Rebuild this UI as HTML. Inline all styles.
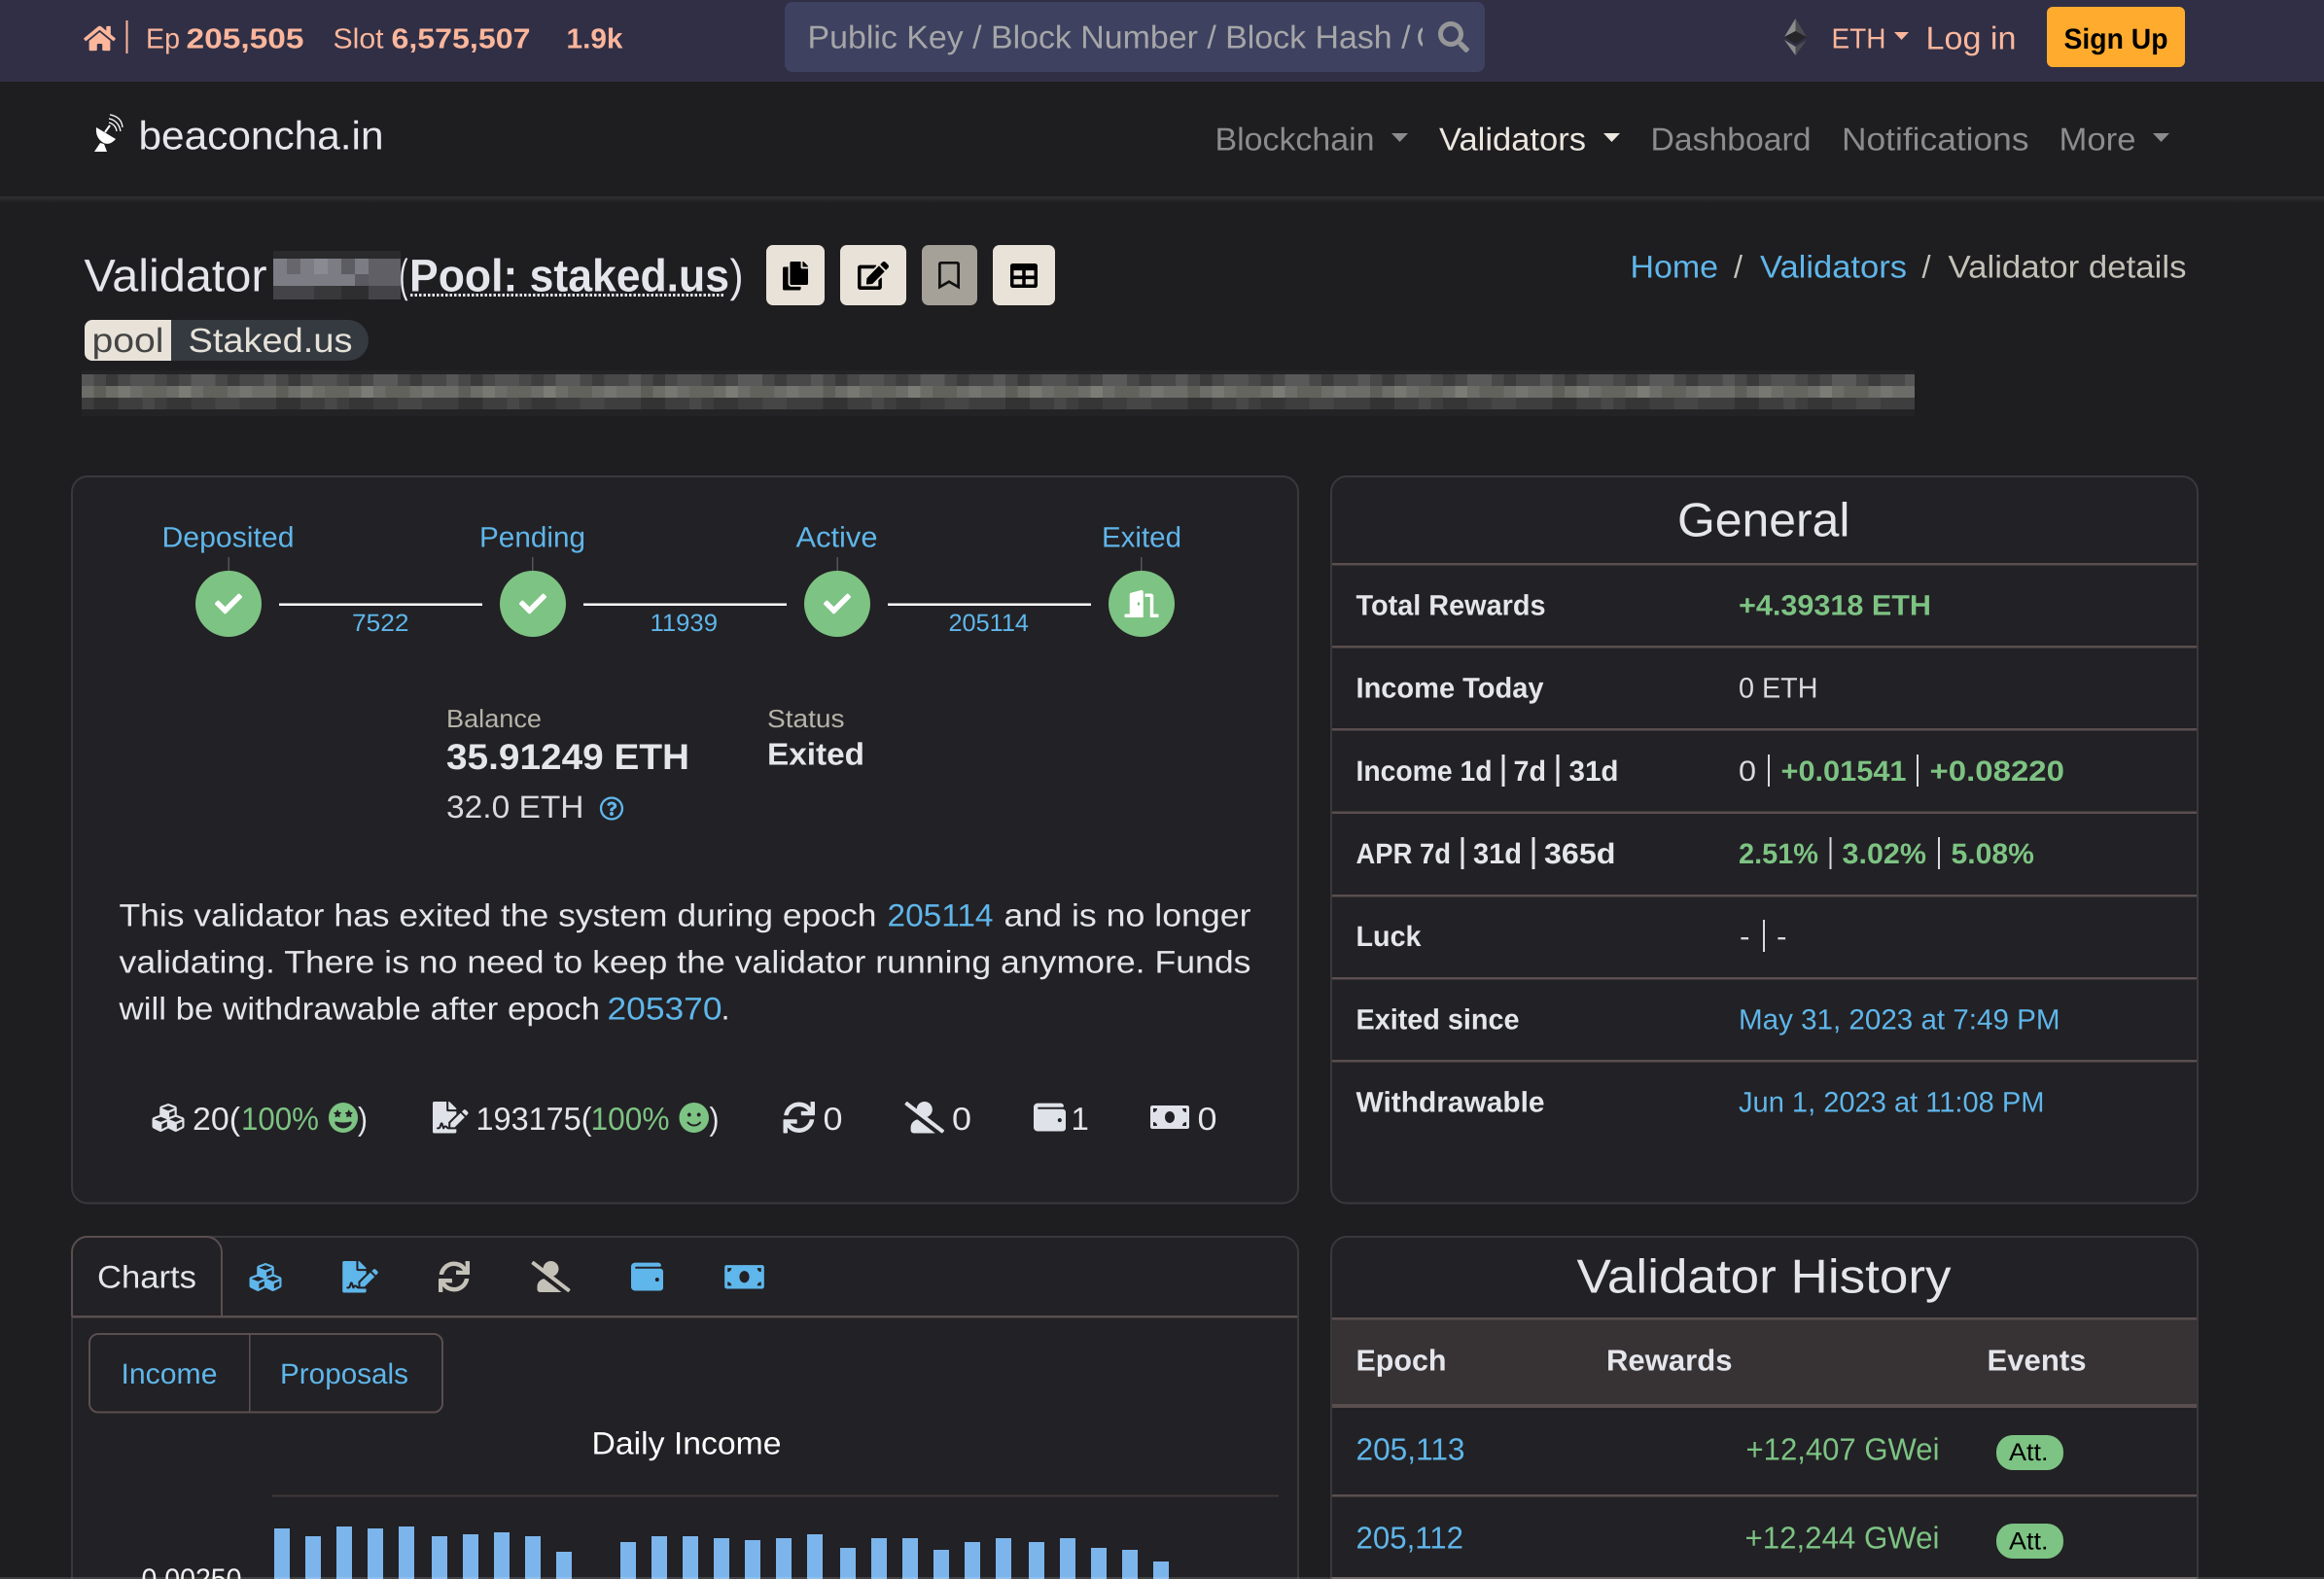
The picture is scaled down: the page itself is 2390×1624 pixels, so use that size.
<!DOCTYPE html>
<html lang="en"><head><meta charset="utf-8"><title>Validator - beaconcha.in</title>
<style>
html,body{margin:0;padding:0;width:2390px;height:1624px;overflow:hidden;background:#1e1d20}
svg{display:block}
text{font-family:"Liberation Sans",Arial,sans-serif;text-rendering:geometricPrecision;white-space:pre;transform:translate(-1.5px,.7px)}
.b{font-weight:700}
.p{fill:#fbb69c}.bl{fill:#5fb6ea}.g{fill:#7dc383}.w{fill:#e4e6ec}.n{fill:#8c8c8c}.lt{fill:#d9dadd}
</style></head><body>
<svg xmlns="http://www.w3.org/2000/svg" width="2390" height="1624" viewBox="0 0 2390 1624">
<defs>
<symbol id="cubes" viewBox="0 0 512 512"><path d="M488.6 250.2L392 214V105.5c0-15-9.3-28.4-23.4-33.7l-100-37.5c-8.1-3.1-17.1-3.1-25.3 0l-100 37.5c-14.1 5.3-23.4 18.7-23.4 33.7V214l-96.6 36.2C9.3 255.5 0 268.9 0 283.9V394c0 13.6 7.7 26.1 19.9 32.2l100 50c10.1 5.1 22.1 5.1 32.2 0l103.9-52 103.9 52c10.1 5.1 22.1 5.1 32.2 0l100-50c12.2-6.1 19.9-18.6 19.9-32.2V283.9c0-15-9.3-28.4-23.4-33.7zM358 214.8l-85 31.9v-68.2l85-37v73.3zM154 104.1l102-38.2 102 38.2v.6l-102 41.4-102-41.4v-.6zm84 291.1l-85 42.5v-79.1l85-38.8v75.4zm0-112l-102 41.4-102-41.4v-.6l102-38.2 102 38.2v.6zm240 112l-85 42.5v-79.1l85-38.8v75.4zm0-112l-102 41.4-102-41.4v-.6l102-38.2 102 38.2v.6z"/></symbol>
<symbol id="sig" viewBox="0 0 576 512"><path d="M218.17 424.14c-2.95-5.92-8.09-6.52-10.17-6.52s-7.22.59-10.02 6.19l-7.67 15.34c-6.37 12.78-25.03 11.37-29.48-2.09L144 386.59l-10.61 31.88c-5.89 17.66-22.38 29.53-41 29.53H80c-8.84 0-16-7.16-16-16s7.16-16 16-16h12.39c4.83 0 9.11-3.08 10.64-7.66l18.19-54.64c3.3-9.81 12.44-16.41 22.78-16.41s19.48 6.59 22.77 16.41l13.88 41.64c19.75-16.19 54.06-9.7 66 14.16 1.89 3.78 5.49 5.95 9.36 6.26v-82.12l128-127.09V160H248c-13.2 0-24-10.8-24-24V0H24C10.7 0 0 10.7 0 24v464c0 13.3 10.7 24 24 24h336c13.3 0 24-10.7 24-24v-40l-128-.11c-16.12-.31-30.58-9.28-37.83-23.75zM384 121.9c0-6.3-2.5-12.4-7-16.9L279.1 7c-4.5-4.5-10.6-7-17-7H256v128h128v-6.1zm-96 225.06V416h68.99l161.68-162.78-67.88-67.88L288 346.96zm280.54-179.63l-31.87-31.87c-9.94-9.94-26.07-9.94-36.01 0l-27.25 27.25 67.88 67.88 27.25-27.25c9.95-9.94 9.95-26.07 0-36.01z"/></symbol>
<symbol id="sync" viewBox="0 0 512 512"><path d="M440.65 12.57l4 82.77A247.16 247.16 0 0 0 255.83 8C134.73 8 33.91 94.92 12.29 209.82A12 12 0 0 0 24.09 224h49.05a12 12 0 0 0 11.67-9.26 175.91 175.91 0 0 1 317-56.94l-101.46-4.86a12 12 0 0 0-12.57 12v47.41a12 12 0 0 0 12 12H500a12 12 0 0 0 12-12V12a12 12 0 0 0-12-12h-47.37a12 12 0 0 0-11.98 12.57zM255.83 432a175.61 175.61 0 0 1-146-77.8l101.8 4.87a12 12 0 0 0 12.57-12v-47.4a12 12 0 0 0-12-12H12a12 12 0 0 0-12 12V500a12 12 0 0 0 12 12h47.35a12 12 0 0 0 12-12.6l-4.15-82.57A247.17 247.17 0 0 0 255.83 504c121.11 0 221.93-86.92 243.55-201.82a12 12 0 0 0-11.8-14.18h-49.05a12 12 0 0 0-11.67 9.26A175.86 175.86 0 0 1 255.83 432z"/></symbol>
<symbol id="userx" viewBox="0 0 640 512"><path d="M633.8 458.1L362.3 248.3C412.1 230.7 448 183.8 448 128 448 57.3 390.7 0 320 0c-67.1 0-121.5 51.8-126.9 117.4L45.5 3.4C38.5-2 28.5-.8 23 6.2L3.4 31.4c-5.4 7-4.2 17 2.8 22.4l588.4 454.7c7 5.4 17 4.2 22.5-2.8l19.6-25.3c5.4-6.8 4.1-16.9-2.9-22.3zM96 422.4V464c0 26.5 21.5 48 48 48h350.2L207.4 290.3C144.2 301.3 96 356 96 422.4z"/></symbol>
<symbol id="wallet" viewBox="0 0 512 512"><path d="M461.2 128H80c-8.84 0-16-7.16-16-16s7.16-16 16-16h384c8.84 0 16-7.16 16-16 0-26.51-21.49-48-48-48H64C28.65 32 0 60.65 0 96v320c0 35.35 28.65 64 64 64h397.2c28.02 0 50.8-21.53 50.8-48V176c0-26.47-22.78-48-50.8-48zM416 336c-17.67 0-32-14.33-32-32s14.33-32 32-32 32 14.33 32 32-14.33 32-32 32z"/></symbol>
<symbol id="money" viewBox="0 0 640 512"><path d="M608 64H32C14.33 64 0 78.33 0 96v320c0 17.67 14.33 32 32 32h576c17.67 0 32-14.33 32-32V96c0-17.67-14.33-32-32-32zM48 400v-64c35.35 0 64 28.65 64 64H48zm0-224v-64h64c0 35.35-28.65 64-64 64zm272 176c-44.19 0-80-42.99-80-96 0-53.02 35.82-96 80-96s80 42.98 80 96c0 53.03-35.83 96-80 96zm272 48h-64c0-35.35 28.65-64 64-64v64zm0-224c-35.35 0-64-28.65-64-64h64v64z"/></symbol>
<symbol id="check" viewBox="0 0 512 512"><path d="M173.898 439.404l-166.4-166.4c-9.997-9.997-9.997-26.206 0-36.204l36.203-36.204c9.997-9.998 26.207-9.998 36.204 0L192 312.69 432.095 72.596c9.997-9.997 26.207-9.997 36.204 0l36.203 36.204c9.997 9.997 9.997 26.206 0 36.204l-294.4 294.401c-9.998 9.997-26.207 9.997-36.204-.001z"/></symbol>
<linearGradient id="navsh" x1="0" y1="0" x2="0" y2="1"><stop offset="0" stop-color="#303033"/><stop offset="1" stop-color="#1e1d20"/></linearGradient>
<clipPath id="searchclip"><rect x="807" y="2" width="656" height="72"/></clipPath>
<pattern id="strip" x="84" y="385" width="187.5" height="36" patternUnits="userSpaceOnUse">
<rect width="187.5" height="12" fill="#484848"/><rect x="0" width="12.5" height="12" fill="#565656"/><rect x="25" width="12.5" height="12" fill="#3a3a3a"/><rect x="50" width="25" height="12" fill="#525252"/><rect x="87.5" width="12.5" height="12" fill="#3e3e3e"/><rect x="112.5" width="25" height="12" fill="#595959"/><rect x="150" width="12.5" height="12" fill="#3c3c3c"/>
<rect y="12" width="187.5" height="12" fill="#6c6c68"/><rect x="12.5" y="12" width="12.5" height="12" fill="#5e5e59"/><rect x="37.5" y="12" width="12.5" height="12" fill="#787872"/><rect x="62.5" y="12" width="25" height="12" fill="#656560"/><rect x="100" y="12" width="12.5" height="12" fill="#7c7c76"/><rect x="125" y="12" width="25" height="12" fill="#62625d"/><rect x="162.5" y="12" width="12.5" height="12" fill="#747470"/>
<rect y="24" width="187.5" height="12" fill="#3e3e3e"/><rect x="12.5" y="24" width="25" height="12" fill="#333"/><rect x="62.5" y="24" width="12.5" height="12" fill="#484848"/><rect x="87.5" y="24" width="25" height="12" fill="#363636"/><rect x="137.5" y="24" width="25" height="12" fill="#464646"/>
</pattern>
</defs>

<rect width="2390" height="1624" fill="#1e1d20"/>

<!-- top bar -->
<rect width="2390" height="84" fill="#302f45"/>
<svg x="86" y="25" width="33" height="29" viewBox="0 0 576 512" fill="#fbb69c"><path d="M280.37 148.26L96 300.11V464a16 16 0 0 0 16 16l112.06-.29a16 16 0 0 0 15.92-16V368a16 16 0 0 1 16-16h64a16 16 0 0 1 16 16v95.64a16 16 0 0 0 16 16.05L464 480a16 16 0 0 0 16-16V300L295.67 148.26a12.19 12.19 0 0 0-15.3 0zM571.6 251.47L488 182.56V44.05a12 12 0 0 0-12-12h-56a12 12 0 0 0-12 12v72.61L318.47 43a48 48 0 0 0-61 0L4.34 251.47a12 12 0 0 0-1.6 16.9l25.5 31A12 12 0 0 0 45.15 301l235.22-193.74a12.19 12.19 0 0 1 15.3 0L530.9 301a12 12 0 0 0 16.9-1.6l25.5-31a12 12 0 0 0-1.7-16.93z"/></svg>
<rect x="129.5" y="21" width="2" height="34" fill="#fbb69c"/>
<text x="151.5" y="49" font-size="29" class="p" textLength="35" lengthAdjust="spacingAndGlyphs">Ep</text>
<text x="193" y="49" font-size="29" class="p b" textLength="121" lengthAdjust="spacingAndGlyphs">205,505</text>
<text x="344" y="49" font-size="29" class="p" textLength="52" lengthAdjust="spacingAndGlyphs">Slot</text>
<text x="404" y="49" font-size="29" class="p b" textLength="143" lengthAdjust="spacingAndGlyphs">6,575,507</text>
<text x="584" y="49" font-size="29" class="p b" textLength="58" lengthAdjust="spacingAndGlyphs">1.9k</text>

<rect x="807" y="2" width="720" height="72" rx="8" fill="#3e4260"/>
<g clip-path="url(#searchclip)">
<text x="832" y="49" font-size="33" fill="#a6a6a8" textLength="620" lengthAdjust="spacingAndGlyphs">Public Key / Block Number / Block Hash /</text>
<text x="1458" y="49" font-size="33" fill="#a6a6a8">G</text>
</g>
<svg x="1479" y="22" width="32" height="32" viewBox="0 0 512 512" fill="#969698"><path d="M505 442.7L405.3 343c-4.5-4.5-10.6-7-17-7H372c27.6-35.3 44-79.7 44-128C416 93.1 322.9 0 208 0S0 93.1 0 208s93.1 208 208 208c48.3 0 92.7-16.4 128-44v16.3c0 6.4 2.5 12.5 7 17l99.7 99.7c9.4 9.4 24.6 9.4 33.9 0l28.3-28.3c9.4-9.4 9.4-24.6.1-34zM208 336c-70.7 0-128-57.2-128-128 0-70.7 57.2-128 128-128 70.7 0 128 57.2 128 128 0 70.7-57.2 128-128 128z"/></svg>

<polygon points="1846.5,19 1835,38 1846.5,32" fill="#8c8c8c"/>
<polygon points="1846.5,19 1858,38 1846.5,32" fill="#4c4c50"/>
<polygon points="1835,38 1846.5,32 1858,38 1846.5,45" fill="#26262a"/>
<polygon points="1835,41 1846.5,48 1846.5,57" fill="#8c8c8c"/>
<polygon points="1858,41 1846.5,48 1846.5,57" fill="#4c4c50"/>
<text x="1885" y="49" font-size="29" class="p" textLength="56" lengthAdjust="spacingAndGlyphs">ETH</text>
<polygon points="1948,33 1963,33 1955.5,41" fill="#fbb69c"/>
<text x="1982" y="50" font-size="33" class="p" textLength="93" lengthAdjust="spacingAndGlyphs">Log in</text>
<rect x="2105" y="7" width="142" height="62" rx="6" fill="#ffab2e"/>
<text x="2124" y="49.5" font-size="29.5" class="b" fill="#000" textLength="107" lengthAdjust="spacingAndGlyphs">Sign Up</text>

<!-- navbar -->
<rect y="202" width="2390" height="7" fill="url(#navsh)"/>
<path d="M99 131L119 143Q112 151 105 146Q98 141 99 131Z" fill="#fff"/>
<path d="M103 147L97 156H110L107 148Z" fill="#fff"/>
<path d="M108 136L113 129" stroke="#fff" stroke-width="2" fill="none"/>
<path d="M112 126Q119 128 120 135M112 122Q122 124 124 135M113 118Q125 120 126 131" stroke="#fff" stroke-width="1.3" fill="none"/>
<text x="144" y="153" font-size="41" fill="#e6e7ea" textLength="252" lengthAdjust="spacingAndGlyphs">beaconcha.in</text>
<text x="1251" y="154" font-size="33" class="n" textLength="164" lengthAdjust="spacingAndGlyphs">Blockchain</text>
<polygon points="1431,137 1448,137 1439.5,146" fill="#8c8c8c"/>
<text x="1481.5" y="154" font-size="33" fill="#ece7df" textLength="151" lengthAdjust="spacingAndGlyphs">Validators</text>
<polygon points="1649,137 1666,137 1657.5,146" fill="#ece7df"/>
<text x="1699" y="154" font-size="33" class="n" textLength="165" lengthAdjust="spacingAndGlyphs">Dashboard</text>
<text x="1895.5" y="154" font-size="33" class="n" textLength="192.5" lengthAdjust="spacingAndGlyphs">Notifications</text>
<text x="2119" y="154" font-size="33" class="n" textLength="79" lengthAdjust="spacingAndGlyphs">More</text>
<polygon points="2214,137 2231,137 2222.5,146" fill="#8c8c8c"/>

<!-- title -->
<text x="88" y="299" font-size="47" class="w" textLength="188" lengthAdjust="spacingAndGlyphs">Validator</text>
<rect x="281" y="258" width="131" height="50" fill="#2a2a2d"/>
<rect x="281" y="266" width="131" height="28" fill="#7c7c84"/>
<rect x="295" y="266" width="14" height="16" fill="#66666c"/><rect x="323" y="266" width="14" height="16" fill="#8a8a92"/><rect x="351" y="266" width="14" height="16" fill="#5c5c62"/><rect x="365" y="282" width="14" height="12" fill="#5a5a60"/><rect x="379" y="266" width="33" height="28" fill="#5f5f65"/>
<rect x="281" y="294" width="131" height="14" fill="#444448"/><rect x="323" y="294" width="28" height="14" fill="#38383b"/><rect x="351" y="294" width="28" height="14" fill="#2e2e31"/>
<text x="412" y="299" font-size="47" class="w" textLength="9" lengthAdjust="spacingAndGlyphs">(</text>
<text x="422.5" y="299" font-size="47" class="w b" textLength="329" lengthAdjust="spacingAndGlyphs">Pool: staked.us</text>
<line x1="422" y1="303.5" x2="745" y2="303.5" stroke="#e4e6ec" stroke-width="3" stroke-dasharray="2.5 2"/>
<text x="752" y="299" font-size="47" class="w" textLength="14" lengthAdjust="spacingAndGlyphs">)</text>

<rect x="788" y="252" width="60" height="62" rx="7" fill="#e8e2d9"/>
<svg x="805" y="269" width="26" height="29.5" viewBox="0 0 448 512" preserveAspectRatio="none"><path d="M320 448v40c0 13.255-10.745 24-24 24H24c-13.255 0-24-10.745-24-24V120c0-13.255 10.745-24 24-24h72v296c0 30.879 25.121 56 56 56h168zm0-344V0H152c-13.255 0-24 10.745-24 24v368c0 13.255 10.745 24 24 24h272c13.255 0 24-10.745 24-24V128H344c-13.2 0-24-10.8-24-24zm120.971-31.029L375.029 7.029A24 24 0 0 0 358.059 0H352v96h96v-6.059a24 24 0 0 0-7.029-16.97z"/></svg>
<rect x="864" y="252" width="68" height="62" rx="7" fill="#e8e2d9"/>
<svg x="882" y="269" width="32" height="29" viewBox="0 0 576 512" preserveAspectRatio="none"><path d="M402.6 83.2l90.2 90.2c3.8 3.8 3.8 10 0 13.8L274.4 405.6l-92.8 10.3c-12.4 1.4-22.9-9.1-21.5-21.5l10.3-92.8L388.8 83.2c3.8-3.8 10-3.8 13.8 0zm162-22.9l-48.8-48.8c-15.2-15.2-39.9-15.2-55.2 0l-35.4 35.4c-3.8 3.8-3.8 10 0 13.8l90.2 90.2c3.8 3.8 10 3.8 13.8 0l35.4-35.4c15.2-15.3 15.2-40 0-55.2zM384 346.2V448H64V128h229.8c3.2 0 6.2-1.3 8.5-3.5l40-40c7.6-7.6 2.2-20.5-8.5-20.5H48C21.5 64 0 85.5 0 112v352c0 26.5 21.5 48 48 48h352c26.5 0 48-21.5 48-48V306.2c0-10.7-12.9-16-20.5-8.5l-40 40c-2.2 2.3-3.5 5.3-3.5 8.5z"/></svg>
<rect x="948" y="252" width="57" height="62" rx="7" fill="#a5a098"/>
<svg x="965" y="269" width="22" height="28.5" viewBox="0 0 384 512" preserveAspectRatio="none" fill="#111"><path d="M336 0H48C21.49 0 0 21.49 0 48v464l192-112 192 112V48c0-26.51-21.49-48-48-48zm0 428.43l-144-84-144 84V54a6 6 0 0 1 6-6h276c3.314 0 6 2.683 6 5.996V428.43z"/></svg>
<rect x="1021" y="252" width="64" height="62" rx="7" fill="#e8e2d9"/>
<svg x="1039" y="269.2" width="28" height="28.6" viewBox="0 0 512 512" preserveAspectRatio="none"><path d="M464 32H48C21.49 32 0 53.49 0 80v352c0 26.51 21.49 48 48 48h416c26.51 0 48-21.49 48-48V80c0-26.51-21.49-48-48-48zM224 416H64v-96h160v96zm0-160H64v-96h160v96zm224 160H288v-96h160v96zm0-160H288v-96h160v96z"/></svg>

<!-- pool badge -->
<rect x="87" y="329" width="292" height="42" rx="21" fill="#343a40"/>
<path d="M176 329H95a8 8 0 0 0-8 8v26a8 8 0 0 0 8 8h81Z" fill="#e8e2d9"/>
<text x="96" y="361.5" font-size="35" fill="#454545" textLength="74" lengthAdjust="spacingAndGlyphs">pool</text>
<text x="195" y="361.5" font-size="35" fill="#e6e1d9" textLength="169" lengthAdjust="spacingAndGlyphs">Staked.us</text>

<!-- redacted strip -->
<rect x="84" y="381" width="1885" height="47" fill="#232325"/>
<rect x="84" y="385" width="1885" height="36" fill="url(#strip)"/>

<!-- breadcrumb -->
<text x="1678" y="285" font-size="32.5" class="bl" textLength="90.5" lengthAdjust="spacingAndGlyphs">Home</text>
<text x="1784.5" y="285" font-size="32.5" fill="#c4c2b8">/</text>
<text x="1811.5" y="285" font-size="32.5" class="bl" textLength="151" lengthAdjust="spacingAndGlyphs">Validators</text>
<text x="1978" y="285" font-size="32.5" fill="#c4c2b8">/</text>
<text x="2005" y="285" font-size="32.5" fill="#c4c2b8" textLength="245" lengthAdjust="spacingAndGlyphs">Validator details</text>

<!-- status card -->
<rect x="74" y="490" width="1261" height="747.5" rx="16" fill="#222125" stroke="#39393c" stroke-width="2"/>
<text x="168" y="562" font-size="29.5" class="bl" textLength="136" lengthAdjust="spacingAndGlyphs">Deposited</text>
<text x="494.5" y="562" font-size="29.5" class="bl" textLength="109" lengthAdjust="spacingAndGlyphs">Pending</text>
<text x="820" y="562" font-size="29.5" class="bl" textLength="84" lengthAdjust="spacingAndGlyphs">Active</text>
<text x="1134.5" y="562" font-size="29.5" class="bl" textLength="82" lengthAdjust="spacingAndGlyphs">Exited</text>
<g fill="#555558"><rect x="234.5" y="573" width="1.5" height="14"/><rect x="547" y="573" width="1.5" height="14"/><rect x="860.5" y="573" width="1.5" height="14"/><rect x="1173" y="573" width="1.5" height="14"/></g>
<g fill="#7dc383"><circle cx="235" cy="621" r="34"/><circle cx="548" cy="621" r="34"/><circle cx="861" cy="621" r="34"/><circle cx="1174" cy="621" r="34"/></g>
<g fill="#fff">
<use href="#check" x="221" y="607" width="28" height="28"/>
<use href="#check" x="534" y="607" width="28" height="28"/>
<use href="#check" x="847" y="607" width="28" height="28"/>
<svg x="1156" y="607" width="36" height="28" viewBox="0 0 640 512"><path d="M624 448h-80V113.45C544 86.19 522.47 64 496 64H384v64h96v384h144c8.84 0 16-7.16 16-16v-32c0-8.84-7.16-16-16-16zM312.24 1.01l-192 49.74C105.99 54.44 96 67.7 96 82.92V448H16c-8.84 0-16 7.16-16 16v32c0 8.84 7.16 16 16 16h336V33.18c0-21.58-19.56-37.41-39.76-32.17zM264 288c-13.25 0-24-14.33-24-32s10.75-32 24-32 24 14.33 24 32-10.75 32-24 32z"/></svg>
<rect x="287" y="620.5" width="209" height="2.5"/><rect x="600" y="620.5" width="209" height="2.5"/><rect x="913" y="620.5" width="209" height="2.5"/>
</g>
<text x="363.5" y="648.5" font-size="25" class="bl" textLength="58.5" lengthAdjust="spacingAndGlyphs">7522</text>
<text x="670" y="648.5" font-size="25" class="bl" textLength="69.5" lengthAdjust="spacingAndGlyphs">11939</text>
<text x="977" y="648.5" font-size="25" class="bl" textLength="82.5" lengthAdjust="spacingAndGlyphs">205114</text>

<text x="460.5" y="747.5" font-size="26" fill="#b6b3a8" textLength="98" lengthAdjust="spacingAndGlyphs">Balance</text>
<text x="460.5" y="790.5" font-size="37" class="w b" textLength="250" lengthAdjust="spacingAndGlyphs">35.91249 ETH</text>
<text x="460.5" y="840.5" font-size="32.5" class="lt" textLength="141.5" lengthAdjust="spacingAndGlyphs">32.0 ETH</text>
<svg x="616" y="819" width="26" height="25" viewBox="0 0 512 512" fill="#5fb6ea"><path d="M256 8C119.043 8 8 119.083 8 256c0 136.997 111.043 248 248 248s248-111.003 248-248C504 119.083 392.957 8 256 8zm0 448c-110.532 0-200-89.431-200-200 0-110.495 89.472-200 200-200 110.491 0 200 89.471 200 200 0 110.53-89.431 200-200 200zm107.244-255.2c0 67.052-72.421 68.084-72.421 92.863V300c0 6.627-5.373 12-12 12h-45.647c-6.627 0-12-5.373-12-12v-8.659c0-35.745 27.1-50.034 47.579-61.516 17.561-9.845 28.324-16.541 28.324-29.579 0-17.246-21.999-28.693-39.784-28.693-23.189 0-33.894 10.977-48.942 29.969-4.057 5.12-11.46 6.071-16.666 2.124l-27.824-21.098c-5.107-3.872-6.251-11.066-2.644-16.363C184.846 131.491 214.94 112 261.794 112c49.071 0 101.45 38.304 101.45 88.8zM298 368c0 23.159-18.841 42-42 42s-42-18.841-42-42 18.841-42 42-42 42 18.841 42 42z"/></svg>
<text x="790.5" y="747.5" font-size="26" fill="#b6b3a8" textLength="79.5" lengthAdjust="spacingAndGlyphs">Status</text>
<text x="790.5" y="786" font-size="32" class="w b" textLength="100" lengthAdjust="spacingAndGlyphs">Exited</text>

<text x="124" y="952" font-size="32.5" class="w" textLength="779" lengthAdjust="spacingAndGlyphs">This validator has exited the system during epoch</text>
<text x="914" y="952" font-size="32.5" class="bl" textLength="109" lengthAdjust="spacingAndGlyphs">205114</text>
<text x="1034" y="952" font-size="32.5" class="w" textLength="254" lengthAdjust="spacingAndGlyphs">and is no longer</text>
<text x="124" y="1000" font-size="32.5" class="w" textLength="1164" lengthAdjust="spacingAndGlyphs">validating. There is no need to keep the validator running anymore. Funds</text>
<text x="124" y="1048" font-size="32.5" class="w" textLength="494.5" lengthAdjust="spacingAndGlyphs">will be withdrawable after epoch</text>
<text x="626" y="1048" font-size="32.5" class="bl" textLength="118" lengthAdjust="spacingAndGlyphs">205370</text>
<text x="743" y="1048" font-size="32.5" class="w">.</text>

<g fill="#dfe2e8">
<use href="#cubes" x="156.5" y="1133" width="33" height="33"/>
<use href="#sig" x="445" y="1133" width="36.5" height="32.5"/>
<use href="#sync" x="805.5" y="1133" width="32.5" height="32.5"/>
<use href="#userx" x="930.5" y="1133" width="40.5" height="32.5"/>
<use href="#wallet" x="1063" y="1132.5" width="33" height="33"/>
<use href="#money" x="1183" y="1133" width="40" height="32"/>
</g>
<text x="199.5" y="1161.5" font-size="33" class="w" textLength="49" lengthAdjust="spacingAndGlyphs">20(</text>
<text x="249.5" y="1161.5" font-size="33" class="g" textLength="80" lengthAdjust="spacingAndGlyphs">100%</text>
<svg x="338" y="1133.5" width="30" height="32" viewBox="0 0 496 512" fill="#7dc383" preserveAspectRatio="none"><path d="M248 8C111 8 0 119 0 256s111 248 248 248 248-111 248-248S385 8 248 8zM94.6 168.9l34.9-5 14.2-31.9c3-5.8 11-5.8 14 0l14.2 31.9 34.9 5c6.2 1 8.9 8.6 4.3 13.2l-25.4 24.6 6 34.9c1 6.2-5.3 11-11 7.9L152 233.3l-31.3 16.3c-5.7 3.1-12-1.7-11-7.9l6-34.9-25.4-24.6c-4.6-4.7-1.9-12.3 4.3-13.3zM248 432c-60.6 0-134.5-38.3-143.8-93.3-2-11.8 9.3-21.6 20.7-17.9C155.1 330.5 200 336 248 336s92.9-5.5 123.1-15.2c11.4-3.7 22.6 6.1 20.7 17.9-9.3 55-83.2 93.3-143.8 93.3zm157.7-249.9l-25.4 24.6 6 34.9c1 6.2-5.3 11-11 7.9L344 233.3l-31.3 16.3c-5.7 3.1-12-1.7-11-7.9l6-34.9-25.4-24.6c-4.6-4.6-1.9-12.2 4.3-13.2l34.9-5 14.2-31.9c3-5.8 11-5.8 14 0l14.2 31.9 34.9 5c6.2 1 8.9 8.6 4.3 13.2z"/></svg>
<text x="369.5" y="1161.5" font-size="33" class="w" textLength="10" lengthAdjust="spacingAndGlyphs">)</text>
<text x="491" y="1161.5" font-size="33" class="w" textLength="119" lengthAdjust="spacingAndGlyphs">193175(</text>
<text x="609" y="1161.5" font-size="33" class="g" textLength="81" lengthAdjust="spacingAndGlyphs">100%</text>
<svg x="698.5" y="1133.5" width="30.5" height="32" viewBox="0 0 496 512" fill="#7dc383" preserveAspectRatio="none"><path d="M248 8C111 8 0 119 0 256s111 248 248 248 248-111 248-248S385 8 248 8zm80 168c17.7 0 32 14.3 32 32s-14.3 32-32 32-32-14.3-32-32 14.3-32 32-32zm-160 0c17.7 0 32 14.3 32 32s-14.3 32-32 32-32-14.3-32-32 14.3-32 32-32zm194.8 170.2C334.3 380.4 292.5 400 248 400s-86.3-19.6-114.8-53.8c-13.6-16.3 11-36.7 24.6-20.5 22.4 26.9 55.2 42.2 90.2 42.2s67.8-15.4 90.2-42.2c13.4-16.2 38.1 4.2 24.6 20.5z"/></svg>
<text x="731" y="1161.5" font-size="33" class="w" textLength="10" lengthAdjust="spacingAndGlyphs">)</text>
<text x="848" y="1161.5" font-size="33" class="w" textLength="20" lengthAdjust="spacingAndGlyphs">0</text>
<text x="980.5" y="1161.5" font-size="33" class="w" textLength="20" lengthAdjust="spacingAndGlyphs">0</text>
<text x="1103" y="1161.5" font-size="33" class="w">1</text>
<text x="1233" y="1161.5" font-size="33" class="w" textLength="20" lengthAdjust="spacingAndGlyphs">0</text>

<!-- general card -->
<rect x="1369" y="490" width="891" height="747.5" rx="16" fill="#222125" stroke="#39393c" stroke-width="2"/>
<text x="1726.5" y="551" font-size="49" class="w" textLength="177.5" lengthAdjust="spacingAndGlyphs">General</text>
<g fill="#5a4e4e"><rect x="1370" y="579" width="889" height="2.5"/><rect x="1370" y="664" width="889" height="2.5"/><rect x="1370" y="749" width="889" height="2.5"/><rect x="1370" y="834.5" width="889" height="2.5"/><rect x="1370" y="920" width="889" height="2.5"/><rect x="1370" y="1005" width="889" height="2.5"/><rect x="1370" y="1090" width="889" height="2.5"/></g>
<g font-size="29.5">
<text x="1396" y="632" class="w b" textLength="195" lengthAdjust="spacingAndGlyphs">Total Rewards</text>
<text x="1396" y="717" class="w b" textLength="193" lengthAdjust="spacingAndGlyphs">Income Today</text>
<text x="1396" y="802.5" class="w b" textLength="140" lengthAdjust="spacingAndGlyphs">Income 1d</text>
<rect x="1544.5" y="776" width="3" height="33" fill="#e4e6ec"/>
<text x="1558" y="802.5" class="w b" textLength="33.5" lengthAdjust="spacingAndGlyphs">7d</text>
<rect x="1600.5" y="776" width="3" height="33" fill="#e4e6ec"/>
<text x="1615" y="802.5" class="w b" textLength="51" lengthAdjust="spacingAndGlyphs">31d</text>
<text x="1396" y="887.5" class="w b" textLength="97.5" lengthAdjust="spacingAndGlyphs">APR 7d</text>
<rect x="1502.5" y="861" width="3" height="33" fill="#e4e6ec"/>
<text x="1516.5" y="887.5" class="w b" textLength="50" lengthAdjust="spacingAndGlyphs">31d</text>
<rect x="1575.5" y="861" width="3" height="33" fill="#e4e6ec"/>
<text x="1589.5" y="887.5" class="w b" textLength="73.5" lengthAdjust="spacingAndGlyphs">365d</text>
<text x="1396" y="972.5" class="w b" textLength="67" lengthAdjust="spacingAndGlyphs">Luck</text>
<text x="1396" y="1058" class="w b" textLength="168" lengthAdjust="spacingAndGlyphs">Exited since</text>
<text x="1396" y="1143" class="w b" textLength="194" lengthAdjust="spacingAndGlyphs">Withdrawable</text>
</g>
<g font-size="29.5">
<text x="1789.5" y="632" class="g b" textLength="198" lengthAdjust="spacingAndGlyphs">+4.39318 ETH</text>
<text x="1789.5" y="717" class="lt" textLength="81.5" lengthAdjust="spacingAndGlyphs">0 ETH</text>
<text x="1789.5" y="802.5" class="lt" textLength="18" lengthAdjust="spacingAndGlyphs">0</text>
<rect x="1818" y="776" width="2" height="33" fill="#d9dadd"/>
<text x="1833" y="802.5" class="g b" textLength="129" lengthAdjust="spacingAndGlyphs">+0.01541</text>
<rect x="1971" y="776" width="2" height="33" fill="#d9dadd"/>
<text x="1986" y="802.5" class="g b" textLength="138.5" lengthAdjust="spacingAndGlyphs">+0.08220</text>
<text x="1789.5" y="887.5" class="g b" textLength="82" lengthAdjust="spacingAndGlyphs">2.51%</text>
<rect x="1881.5" y="861" width="2" height="33" fill="#d9dadd"/>
<text x="1896" y="887.5" class="g b" textLength="86.5" lengthAdjust="spacingAndGlyphs">3.02%</text>
<rect x="1993" y="861" width="2" height="33" fill="#d9dadd"/>
<text x="2008" y="887.5" class="g b" textLength="85.5" lengthAdjust="spacingAndGlyphs">5.08%</text>
<text x="1790.5" y="972.5" class="lt" textLength="10.5" lengthAdjust="spacingAndGlyphs">-</text>
<rect x="1813" y="946" width="2" height="33" fill="#d9dadd"/>
<text x="1828.5" y="972.5" class="lt" textLength="10.5" lengthAdjust="spacingAndGlyphs">-</text>
<text x="1789.5" y="1058" class="bl" textLength="330.5" lengthAdjust="spacingAndGlyphs">May 31, 2023 at 7:49 PM</text>
<text x="1789.5" y="1143" class="bl" textLength="314.5" lengthAdjust="spacingAndGlyphs">Jun 1, 2023 at 11:08 PM</text>
</g>

<!-- charts card -->
<path d="M74 1624V1288a16 16 0 0 1 16-16H1319a16 16 0 0 1 16 16V1624" fill="#222125" stroke="#39393c" stroke-width="2"/>
<path d="M74 1354V1288a16 16 0 0 1 16-16H212a16 16 0 0 1 16 16V1354" fill="#222125" stroke="#5a4e4e" stroke-width="2"/>
<rect x="74" y="1353" width="1260" height="2.5" fill="#5a4e4e"/>
<text x="101.5" y="1324" font-size="32.5" class="w" textLength="102" lengthAdjust="spacingAndGlyphs">Charts</text>
<g fill="#5fb6ea">
<use href="#cubes" x="256.5" y="1297" width="33" height="33"/>
<use href="#sig" x="352" y="1297" width="37" height="32.5"/>
<use href="#wallet" x="649" y="1296.5" width="33" height="33"/>
<use href="#money" x="745" y="1297" width="41" height="32.5"/>
</g>
<g fill="#c4c2b8">
<use href="#sync" x="451" y="1297" width="32" height="32"/>
<use href="#userx" x="546.5" y="1297" width="40" height="32"/>
</g>
<rect x="92" y="1372" width="363" height="80.5" rx="9" fill="none" stroke="#5a4e4e" stroke-width="2"/>
<rect x="256" y="1373" width="1.5" height="79" fill="#5a4e4e"/>
<text x="126" y="1422.5" font-size="29.5" class="bl" textLength="99" lengthAdjust="spacingAndGlyphs">Income</text>
<text x="289.5" y="1422.5" font-size="29.5" class="bl" textLength="132" lengthAdjust="spacingAndGlyphs">Proposals</text>
<text x="610" y="1495" font-size="32.5" fill="#fff" textLength="195" lengthAdjust="spacingAndGlyphs">Daily Income</text>
<rect x="280" y="1537.5" width="1035" height="2" fill="#3f3639"/>
<g fill="#7cb5ec">
<rect x="282" y="1572" width="16" height="52"/><rect x="314" y="1580" width="16" height="44"/><rect x="346" y="1570" width="16" height="54"/><rect x="378" y="1572" width="16" height="52"/><rect x="410" y="1570" width="16" height="54"/><rect x="444" y="1580" width="16" height="44"/><rect x="476" y="1578" width="16" height="46"/><rect x="508" y="1576" width="16" height="48"/><rect x="540" y="1580" width="16" height="44"/><rect x="572" y="1596" width="16" height="28"/><rect x="638" y="1586" width="16" height="38"/><rect x="670" y="1580" width="16" height="44"/><rect x="702" y="1580" width="16" height="44"/><rect x="734" y="1582" width="16" height="42"/><rect x="766" y="1584" width="16" height="40"/><rect x="798" y="1582" width="16" height="42"/><rect x="830" y="1578" width="16" height="46"/><rect x="864" y="1592" width="16" height="32"/><rect x="896" y="1582" width="16" height="42"/><rect x="928" y="1582" width="16" height="42"/><rect x="960" y="1594" width="16" height="30"/><rect x="992" y="1586" width="16" height="38"/><rect x="1024" y="1582" width="16" height="42"/><rect x="1058" y="1586" width="16" height="38"/><rect x="1090" y="1582" width="16" height="42"/><rect x="1122" y="1592" width="16" height="32"/><rect x="1154" y="1594" width="16" height="30"/><rect x="1186" y="1606" width="16" height="18"/>
</g>
<text x="147" y="1633" font-size="29" fill="#f0f0f0" textLength="103" lengthAdjust="spacingAndGlyphs">0.00250</text>

<!-- history card -->
<path d="M1369 1624V1288a16 16 0 0 1 16-16H2244a16 16 0 0 1 16 16V1624" fill="#222125" stroke="#39393c" stroke-width="2"/>
<text x="1623" y="1329" font-size="49" class="w" textLength="385" lengthAdjust="spacingAndGlyphs">Validator History</text>
<rect x="1370" y="1357" width="889" height="87" fill="#373234"/>
<rect x="1370" y="1355" width="889" height="2.5" fill="#5a4e4e"/>
<rect x="1370" y="1444" width="889" height="4" fill="#5a4e4e"/>
<text x="1396" y="1409" font-size="30.5" class="w b" textLength="93" lengthAdjust="spacingAndGlyphs">Epoch</text>
<text x="1653.5" y="1409" font-size="30.5" class="w b" textLength="129.5" lengthAdjust="spacingAndGlyphs">Rewards</text>
<text x="2045" y="1409" font-size="30.5" class="w b" textLength="102" lengthAdjust="spacingAndGlyphs">Events</text>
<text x="1396" y="1501" font-size="32" class="bl" textLength="112" lengthAdjust="spacingAndGlyphs">205,113</text>
<text x="1797" y="1501" font-size="32" class="g" textLength="199" lengthAdjust="spacingAndGlyphs">+12,407 GWei</text>
<rect x="2053" y="1476" width="69" height="36" rx="17" fill="#7dc383"/>
<text x="2067.5" y="1501.5" font-size="25.5" fill="#000" textLength="40.5" lengthAdjust="spacingAndGlyphs">Att.</text>
<rect x="1370" y="1537" width="889" height="2.5" fill="#5a4e4e"/>
<text x="1396" y="1592" font-size="32" class="bl" textLength="110.5" lengthAdjust="spacingAndGlyphs">205,112</text>
<text x="1796" y="1592" font-size="32" class="g" textLength="200" lengthAdjust="spacingAndGlyphs">+12,244 GWei</text>
<rect x="2053" y="1567" width="69" height="36" rx="17" fill="#7dc383"/>
<text x="2067.5" y="1593" font-size="25.5" fill="#000" textLength="40.5" lengthAdjust="spacingAndGlyphs">Att.</text>
<rect x="1370" y="1622" width="889" height="2" fill="#5a4e4e"/>

<rect x="0" y="1622" width="2390" height="2" fill="#fff" fill-opacity="0.14"/>
</svg>
</body></html>
